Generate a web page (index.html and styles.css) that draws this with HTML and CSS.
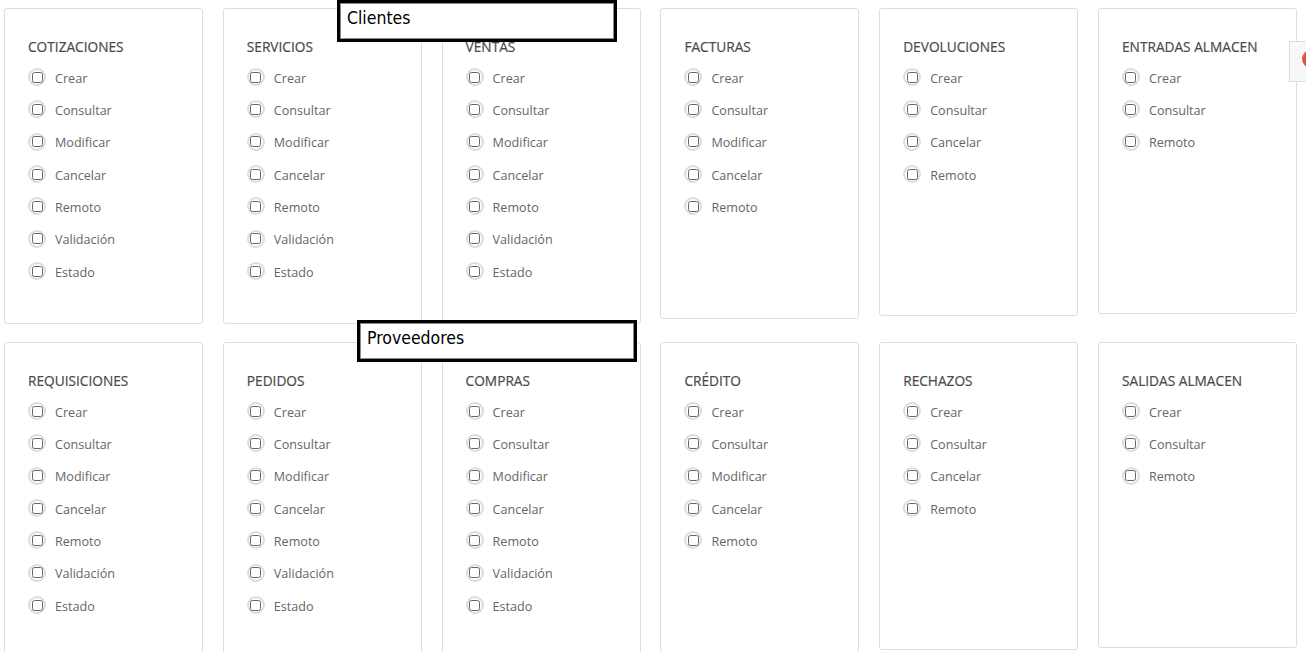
FILE: index.html
```html
<!DOCTYPE html>
<html lang="es">
<head>
<meta charset="utf-8">
<title>Permisos</title>
<link rel="stylesheet" href="styles.css">
</head>
<body>
<div class="page">
  <div class="row">
    <div class="card h7">
      <h4 class="card-title">COTIZACIONES</h4>
      <ul class="opts">
        <li><span class="ring"><span class="box"></span></span>Crear</li>
        <li><span class="ring"><span class="box"></span></span>Consultar</li>
        <li><span class="ring"><span class="box"></span></span>Modificar</li>
        <li><span class="ring"><span class="box"></span></span>Cancelar</li>
        <li><span class="ring"><span class="box"></span></span>Remoto</li>
        <li><span class="ring"><span class="box"></span></span>Validación</li>
        <li><span class="ring"><span class="box"></span></span>Estado</li>
      </ul>
    </div>
    <div class="card h7">
      <h4 class="card-title">SERVICIOS</h4>
      <ul class="opts">
        <li><span class="ring"><span class="box"></span></span>Crear</li>
        <li><span class="ring"><span class="box"></span></span>Consultar</li>
        <li><span class="ring"><span class="box"></span></span>Modificar</li>
        <li><span class="ring"><span class="box"></span></span>Cancelar</li>
        <li><span class="ring"><span class="box"></span></span>Remoto</li>
        <li><span class="ring"><span class="box"></span></span>Validación</li>
        <li><span class="ring"><span class="box"></span></span>Estado</li>
      </ul>
    </div>
    <div class="card h7">
      <h4 class="card-title">VENTAS</h4>
      <ul class="opts">
        <li><span class="ring"><span class="box"></span></span>Crear</li>
        <li><span class="ring"><span class="box"></span></span>Consultar</li>
        <li><span class="ring"><span class="box"></span></span>Modificar</li>
        <li><span class="ring"><span class="box"></span></span>Cancelar</li>
        <li><span class="ring"><span class="box"></span></span>Remoto</li>
        <li><span class="ring"><span class="box"></span></span>Validación</li>
        <li><span class="ring"><span class="box"></span></span>Estado</li>
      </ul>
    </div>
    <div class="card h5">
      <h4 class="card-title">FACTURAS</h4>
      <ul class="opts">
        <li><span class="ring"><span class="box"></span></span>Crear</li>
        <li><span class="ring"><span class="box"></span></span>Consultar</li>
        <li><span class="ring"><span class="box"></span></span>Modificar</li>
        <li><span class="ring"><span class="box"></span></span>Cancelar</li>
        <li><span class="ring"><span class="box"></span></span>Remoto</li>
      </ul>
    </div>
    <div class="card h4">
      <h4 class="card-title">DEVOLUCIONES</h4>
      <ul class="opts">
        <li><span class="ring"><span class="box"></span></span>Crear</li>
        <li><span class="ring"><span class="box"></span></span>Consultar</li>
        <li><span class="ring"><span class="box"></span></span>Cancelar</li>
        <li><span class="ring"><span class="box"></span></span>Remoto</li>
      </ul>
    </div>
    <div class="card h3">
      <h4 class="card-title">ENTRADAS ALMACEN</h4>
      <ul class="opts">
        <li><span class="ring"><span class="box"></span></span>Crear</li>
        <li><span class="ring"><span class="box"></span></span>Consultar</li>
        <li><span class="ring"><span class="box"></span></span>Remoto</li>
      </ul>
    </div>
  </div>

  <div class="row">
    <div class="card h7">
      <h4 class="card-title">REQUISICIONES</h4>
      <ul class="opts">
        <li><span class="ring"><span class="box"></span></span>Crear</li>
        <li><span class="ring"><span class="box"></span></span>Consultar</li>
        <li><span class="ring"><span class="box"></span></span>Modificar</li>
        <li><span class="ring"><span class="box"></span></span>Cancelar</li>
        <li><span class="ring"><span class="box"></span></span>Remoto</li>
        <li><span class="ring"><span class="box"></span></span>Validación</li>
        <li><span class="ring"><span class="box"></span></span>Estado</li>
      </ul>
    </div>
    <div class="card h7">
      <h4 class="card-title">PEDIDOS</h4>
      <ul class="opts">
        <li><span class="ring"><span class="box"></span></span>Crear</li>
        <li><span class="ring"><span class="box"></span></span>Consultar</li>
        <li><span class="ring"><span class="box"></span></span>Modificar</li>
        <li><span class="ring"><span class="box"></span></span>Cancelar</li>
        <li><span class="ring"><span class="box"></span></span>Remoto</li>
        <li><span class="ring"><span class="box"></span></span>Validación</li>
        <li><span class="ring"><span class="box"></span></span>Estado</li>
      </ul>
    </div>
    <div class="card h7">
      <h4 class="card-title">COMPRAS</h4>
      <ul class="opts">
        <li><span class="ring"><span class="box"></span></span>Crear</li>
        <li><span class="ring"><span class="box"></span></span>Consultar</li>
        <li><span class="ring"><span class="box"></span></span>Modificar</li>
        <li><span class="ring"><span class="box"></span></span>Cancelar</li>
        <li><span class="ring"><span class="box"></span></span>Remoto</li>
        <li><span class="ring"><span class="box"></span></span>Validación</li>
        <li><span class="ring"><span class="box"></span></span>Estado</li>
      </ul>
    </div>
    <div class="card h5">
      <h4 class="card-title">CRÉDITO</h4>
      <ul class="opts">
        <li><span class="ring"><span class="box"></span></span>Crear</li>
        <li><span class="ring"><span class="box"></span></span>Consultar</li>
        <li><span class="ring"><span class="box"></span></span>Modificar</li>
        <li><span class="ring"><span class="box"></span></span>Cancelar</li>
        <li><span class="ring"><span class="box"></span></span>Remoto</li>
      </ul>
    </div>
    <div class="card h4">
      <h4 class="card-title">RECHAZOS</h4>
      <ul class="opts">
        <li><span class="ring"><span class="box"></span></span>Crear</li>
        <li><span class="ring"><span class="box"></span></span>Consultar</li>
        <li><span class="ring"><span class="box"></span></span>Cancelar</li>
        <li><span class="ring"><span class="box"></span></span>Remoto</li>
      </ul>
    </div>
    <div class="card h3">
      <h4 class="card-title">SALIDAS ALMACEN</h4>
      <ul class="opts">
        <li><span class="ring"><span class="box"></span></span>Crear</li>
        <li><span class="ring"><span class="box"></span></span>Consultar</li>
        <li><span class="ring"><span class="box"></span></span>Remoto</li>
      </ul>
    </div>
  </div>

  <div class="label label-clientes">Clientes</div>
  <div class="label label-proveedores">Proveedores</div>
  <div class="side-toggle"><span class="side-icon"></span></div>
</div>
</body>
</html>
```

FILE: styles.css
```css
html, body {
  margin: 0;
  padding: 0;
  height: 100%;
  overflow: hidden;
  background: #ffffff;
}

body {
  font-family: "Open Sans", "Noto Sans", sans-serif;
  color: #666666;
}

.page {
  position: relative;
  padding: 8px 0 0 4px;
  display: flex;
  flex-direction: column;
  gap: 18px;
}

.row {
  display: grid;
  grid-template-columns: repeat(6, 199px);
  column-gap: 19.8px;
  align-items: start;
}

.card {
  box-sizing: border-box;
  border: 1px solid #dedede;
  border-radius: 3px;
  background: #ffffff;
  padding: 28px 10px 0 23px;
}

.h7 { height: 316px; }
.h5 { height: 311px; }
.h4 { height: 308px; }
.h3 { height: 306px; }

.card-title {
  margin: 0 0 5px;
  font-size: 13.7px;
  line-height: 20px;
  font-weight: 400;
  color: #4a4a4a;
  white-space: nowrap;
  -webkit-text-stroke: 0.2px #4a4a4a;
}

.opts {
  list-style: none;
  margin: 0;
  padding: 0;
}

.opts li {
  display: flex;
  align-items: center;
  gap: 9px;
  height: 32.33px;
  font-size: 12.6px;
  color: #666666;
}

.ring {
  box-sizing: border-box;
  width: 18px;
  height: 18px;
  border-radius: 50%;
  border: 2px solid #dcdcdc;
  display: flex;
  align-items: center;
  justify-content: center;
  flex: none;
  margin-top: -2px;
}

.box {
  box-sizing: border-box;
  width: 11px;
  height: 11px;
  border: 1px solid #666666;
  border-radius: 2.5px;
  background: #ffffff;
}

.label {
  position: absolute;
  box-sizing: border-box;
  width: 280px;
  height: 42px;
  border: 3px solid #000000;
  box-shadow: inset 0 0 0 1px #8a8a8a;
  background: #ffffff;
  padding: 0 0 0 7px;
  font-family: "DejaVu Sans Condensed", "DejaVu Sans", sans-serif;
  font-stretch: condensed;
  font-size: 17.5px;
  line-height: 30px;
  color: #000000;
}

.label-clientes {
  left: 337px;
  top: 0;
}

.label-proveedores {
  left: 357px;
  top: 320px;
}

.side-toggle {
  position: absolute;
  left: 1289px;
  top: 41px;
  width: 40px;
  height: 41px;
  box-sizing: border-box;
  background: #f8f8f8;
  border: 1px solid #dddddd;
}

.side-icon {
  position: absolute;
  left: 12px;
  top: 8px;
  width: 18px;
  height: 18px;
  border-radius: 50%;
  background: #e0573e;
}
```
